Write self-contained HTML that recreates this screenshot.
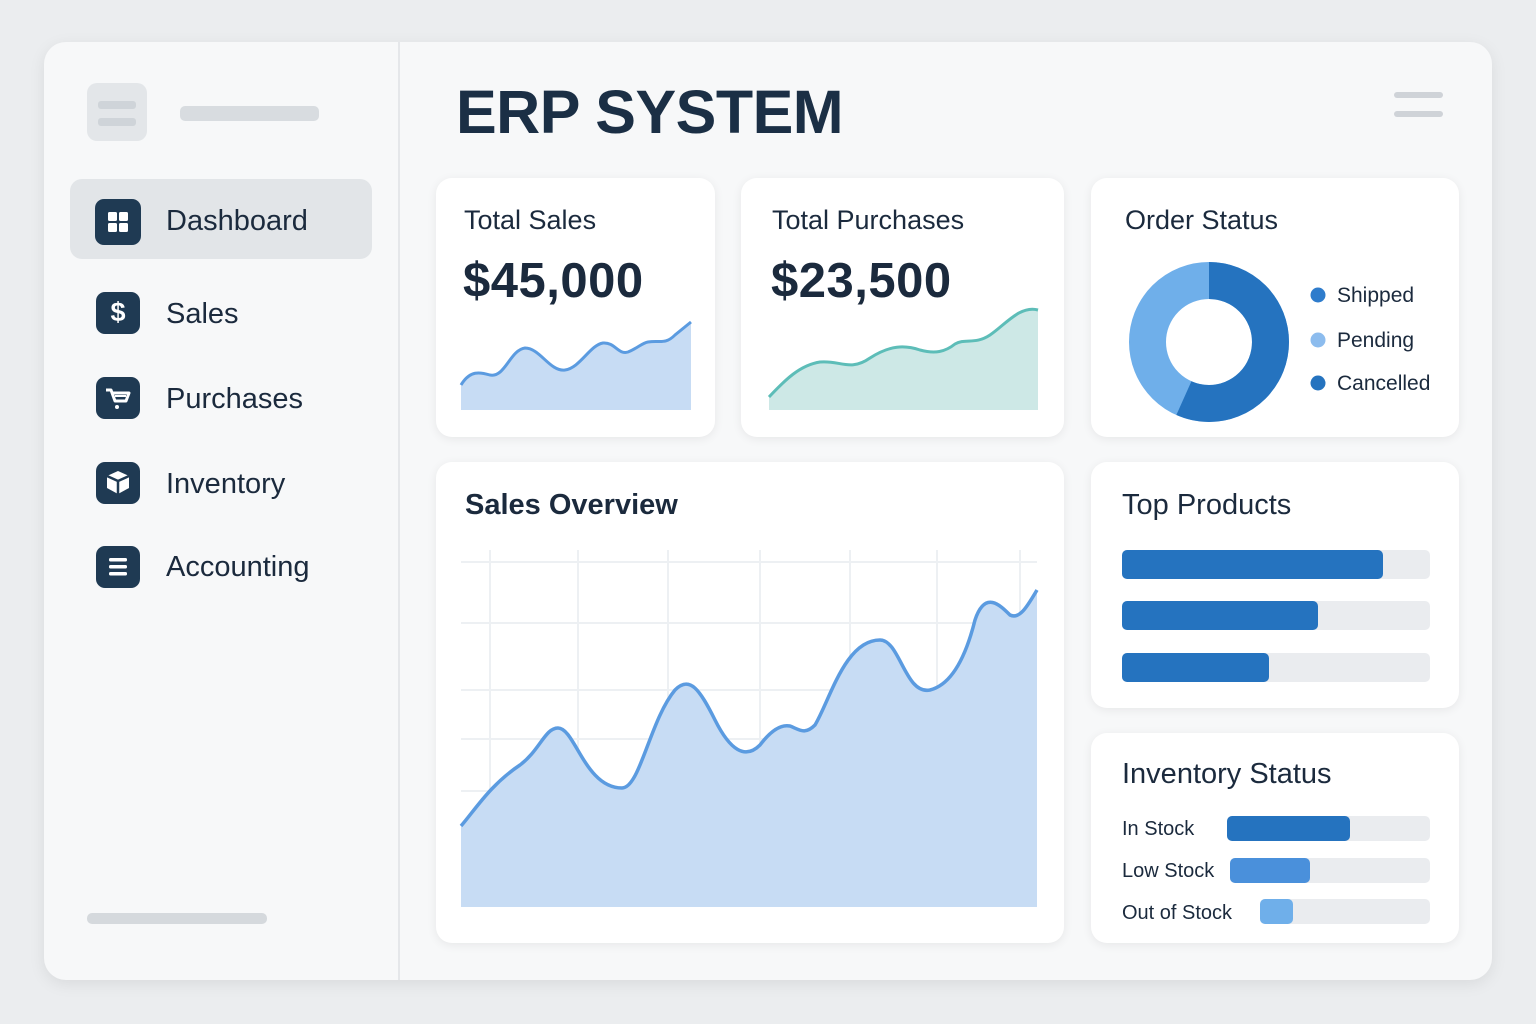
<!DOCTYPE html>
<html><head><meta charset="utf-8"><style>
*{margin:0;padding:0;box-sizing:border-box}
body{width:1536px;height:1024px;background:#ebedef;font-family:"Liberation Sans",sans-serif;color:#1b2a3d;position:relative;overflow:hidden}
.abs{position:absolute}
.panel{left:44px;top:42px;width:1448px;height:938px;background:#f7f8f9;border-radius:22px;box-shadow:0 4px 16px rgba(0,0,0,.08)}
.card{position:absolute;background:#fff;border-radius:16px;box-shadow:0 2px 10px rgba(0,0,0,.07)}
.t{position:absolute;white-space:nowrap}
.ico{position:absolute;width:44px;height:42px;border-radius:9px;background:#1f3a53;left:96px}
.nav{position:absolute;left:166px;font-size:29px;color:#1b2a3d}
.bar{position:absolute;height:29px;border-radius:5px;background:#eaecef}
.fill{position:absolute;left:0;top:0;height:100%;border-radius:5px;background:#2573bf}
</style></head><body>
<div class="abs panel"></div>
<div class="abs" style="left:398px;top:42px;width:2px;height:938px;background:#e5e7ea"></div>
<div class="abs" style="left:87px;top:83px;width:60px;height:58px;border-radius:10px;background:#e3e6e9"></div>
<div class="abs" style="left:98px;top:101px;width:38px;height:8px;border-radius:3px;background:#cfd4d9"></div>
<div class="abs" style="left:98px;top:118px;width:38px;height:8px;border-radius:3px;background:#cfd4d9"></div>
<div class="abs" style="left:180px;top:106px;width:139px;height:15px;border-radius:5px;background:#d8dce0"></div>
<div class="abs" style="left:70px;top:179px;width:302px;height:80px;border-radius:12px;background:#e2e5e8"></div>
<div class="abs" style="left:87px;top:913px;width:180px;height:11px;border-radius:5px;background:#d5d9dd"></div>

<div class="ico" style="top:199px;width:46px;height:46px;left:95px"><svg width="46" height="46"><rect x="13" y="13" width="9" height="9" rx="1.5" fill="#fff"/><rect x="24" y="13" width="9" height="9" rx="1.5" fill="#fff"/><rect x="13" y="24" width="9" height="9" rx="1.5" fill="#fff"/><rect x="24" y="24" width="9" height="9" rx="1.5" fill="#fff"/></svg></div>
<div class="nav" style="top:205px">Dashboard</div>
<div class="ico" style="top:292px"><div class="t" style="left:0;width:44px;text-align:center;top:5px;font-size:27px;font-weight:bold;color:#fff">$</div></div>
<div class="nav" style="top:298px">Sales</div>
<div class="ico" style="top:377px"><svg width="44" height="42"><path d="M10 13h5l4 11h11l3-8H17" stroke="#fff" stroke-width="3" fill="none" stroke-linejoin="round"/><path d="M19 19h11" stroke="#fff" stroke-width="2"/><circle cx="21" cy="30" r="2" fill="#fff"/></svg></div>
<div class="nav" style="top:383px">Purchases</div>
<div class="ico" style="top:462px"><svg width="44" height="42"><path d="M22 9l11 5v12l-11 6-11-6V14z" fill="#fff"/><path d="M11 14l11 5 11-5M22 19v13" stroke="#1f3a53" stroke-width="2.5" fill="none"/></svg></div>
<div class="nav" style="top:468px">Inventory</div>
<div class="ico" style="top:546px"><svg width="44" height="42"><rect x="13" y="12" width="18" height="3.5" rx="1.5" fill="#fff"/><rect x="13" y="19" width="18" height="3.5" rx="1.5" fill="#fff"/><rect x="13" y="26" width="18" height="3.5" rx="1.5" fill="#fff"/></svg></div>
<div class="nav" style="top:551px">Accounting</div>

<div class="t" style="left:456px;top:77px;font-size:61px;font-weight:bold;color:#1b2f45;letter-spacing:-0.5px">ERP SYSTEM</div>
<div class="abs" style="left:1394px;top:92px;width:49px;height:6px;border-radius:3px;background:#cfd3d8"></div>
<div class="abs" style="left:1394px;top:111px;width:49px;height:6px;border-radius:3px;background:#cfd3d8"></div>

<div class="card" style="left:436px;top:178px;width:279px;height:259px"></div>
<div class="t" style="left:464px;top:205px;font-size:27px">Total Sales</div>
<div class="t" style="left:463px;top:253px;font-size:49px;font-weight:bold;letter-spacing:0.5px">$45,000</div>
<div class="card" style="left:741px;top:178px;width:323px;height:259px"></div>
<div class="t" style="left:772px;top:205px;font-size:27px">Total Purchases</div>
<div class="t" style="left:771px;top:253px;font-size:49px;font-weight:bold;letter-spacing:0.5px">$23,500</div>
<div class="card" style="left:1091px;top:178px;width:368px;height:259px"></div>
<div class="t" style="left:1125px;top:205px;font-size:27px">Order Status</div>
<div class="card" style="left:436px;top:462px;width:628px;height:481px"></div>
<div class="t" style="left:465px;top:489px;font-size:29px;font-weight:bold">Sales Overview</div>
<div class="card" style="left:1091px;top:462px;width:368px;height:246px"></div>
<div class="t" style="left:1122px;top:489px;font-size:29px">Top Products</div>
<div class="card" style="left:1091px;top:733px;width:368px;height:210px"></div>
<div class="t" style="left:1122px;top:758px;font-size:29px">Inventory Status</div>

<svg class="abs" style="left:0;top:0" width="1536" height="1024">
<path d="M461 385C470 370 480 372 490 375C505 378 510 350 525 348C540 348 550 372 565 370C580 368 590 345 603 343C615 342 618 355 628 352C638 348 642 343 648 342C660 340 665 345 675 335L691 322V410H461Z" fill="#c7dcf4"/>
<path d="M461 385C470 370 480 372 490 375C505 378 510 350 525 348C540 348 550 372 565 370C580 368 590 345 603 343C615 342 618 355 628 352C638 348 642 343 648 342C660 340 665 345 675 335L691 322" stroke="#5b9be0" stroke-width="3" fill="none"/>
<path d="M769 397C785 380 800 365 820 362C840 360 850 372 870 358C890 345 905 345 920 350C935 354 945 352 955 344C965 338 975 345 990 335C1005 325 1020 305 1038 310V410H769Z" fill="#cde8e6"/>
<path d="M769 397C785 380 800 365 820 362C840 360 850 372 870 358C890 345 905 345 920 350C935 354 945 352 955 344C965 338 975 345 990 335C1005 325 1020 305 1038 310" stroke="#5dbdb8" stroke-width="3" fill="none"/>
<circle cx="1209" cy="342" r="61.5" fill="none" stroke="#6fafea" stroke-width="37"/>
<circle cx="1209" cy="342" r="61.5" fill="none" stroke="#2573bf" stroke-width="37" stroke-dasharray="219 400" transform="rotate(-90 1209 342)"/>
<circle cx="1318" cy="295" r="7.5" fill="#2e7ccc"/><circle cx="1318" cy="340" r="7.5" fill="#8cbcee"/><circle cx="1318" cy="383" r="7.5" fill="#2573bf"/>
<g stroke="#edf0f3" stroke-width="2">
<path d="M461 562H1037M461 623H1037M461 690H1037M461 739H1037M461 791H1037M490 550V907M578 550V907M668 550V907M760 550V907M850 550V907M937 550V907M1020 550V907"/></g>
<path d="M461 826C475 810 490 785 520 765C540 750 545 728 558 728C575 728 585 788 622 788C640 788 650 720 675 690C690 675 700 690 715 720C730 750 745 760 760 745C775 725 785 725 790 726C800 730 805 735 815 725C830 700 845 640 880 640C900 640 905 695 930 690C950 685 965 660 975 620C985 590 1000 605 1010 615C1020 620 1028 605 1037 590V907H461Z" fill="#c7dcf4"/>
<path d="M461 826C475 810 490 785 520 765C540 750 545 728 558 728C575 728 585 788 622 788C640 788 650 720 675 690C690 675 700 690 715 720C730 750 745 760 760 745C775 725 785 725 790 726C800 730 805 735 815 725C830 700 845 640 880 640C900 640 905 695 930 690C950 685 965 660 975 620C985 590 1000 605 1010 615C1020 620 1028 605 1037 590" stroke="#5b9be0" stroke-width="3.5" fill="none"/>
</svg>
<div class="t" style="left:1337px;top:284px;font-size:21px">Shipped</div>
<div class="t" style="left:1337px;top:329px;font-size:21px">Pending</div>
<div class="t" style="left:1337px;top:372px;font-size:21px">Cancelled</div>

<div class="bar" style="left:1122px;top:550px;width:308px"><div class="fill" style="width:261px"></div></div>
<div class="bar" style="left:1122px;top:601px;width:308px"><div class="fill" style="width:196px"></div></div>
<div class="bar" style="left:1122px;top:653px;width:308px"><div class="fill" style="width:147px"></div></div>

<div class="t" style="left:1122px;top:818px;font-size:20px">In Stock</div>
<div class="t" style="left:1122px;top:860px;font-size:20px">Low Stock</div>
<div class="t" style="left:1122px;top:902px;font-size:20px">Out of Stock</div>
<div class="bar" style="left:1227px;top:816px;width:203px;height:25px"><div class="fill" style="width:123px"></div></div>
<div class="bar" style="left:1230px;top:858px;width:200px;height:25px"><div class="fill" style="width:80px;background:#4a90db"></div></div>
<div class="bar" style="left:1260px;top:899px;width:170px;height:25px"><div class="fill" style="width:33px;background:#6fafea"></div></div>
</body></html>
